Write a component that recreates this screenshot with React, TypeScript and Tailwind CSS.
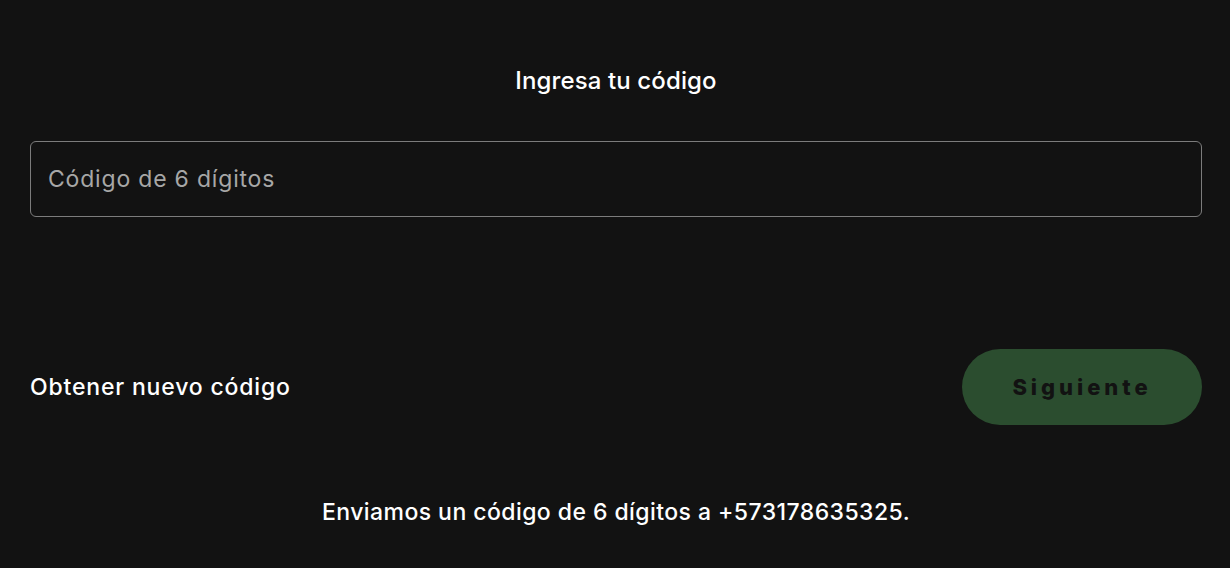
export default function App() {
  return (
    <div
      className="min-h-[568px] w-full bg-[#121212] text-white pl-[30px] pr-[28px] pt-[66px]"
      style={{ fontFamily: 'Inter, "Noto Sans", sans-serif' }}
    >
      <h1 className="text-center text-[24px] font-medium leading-[30px] tracking-[0.005em]">
        Ingresa tu código
      </h1>

      <div className="mt-[45px] h-[76px] rounded-[6px] border border-[#7c7c7c] flex items-center px-[17px]">
        <input
          type="text"
          placeholder="Código de 6 dígitos"
          className="w-full bg-transparent outline-none text-[23px] text-white placeholder:text-[#a7a7a7] tracking-[0.035em]"
        />
      </div>

      <div className="mt-[132px] flex items-center justify-between">
        <button className="text-[23px] font-medium tracking-[0.036em] text-white">
          Obtener nuevo código
        </button>
        <button
          disabled
          className="w-[240px] h-[76px] rounded-full bg-[#2b4d2f] text-[#121212] text-[22px] font-extrabold tracking-[0.18em]"
        >
          Siguiente
        </button>
      </div>

      <p className="mt-[70px] text-center text-[23px] font-medium tracking-[0.019em]">
        Enviamos un código de 6 dígitos a +573178635325.
      </p>
    </div>
  );
}
